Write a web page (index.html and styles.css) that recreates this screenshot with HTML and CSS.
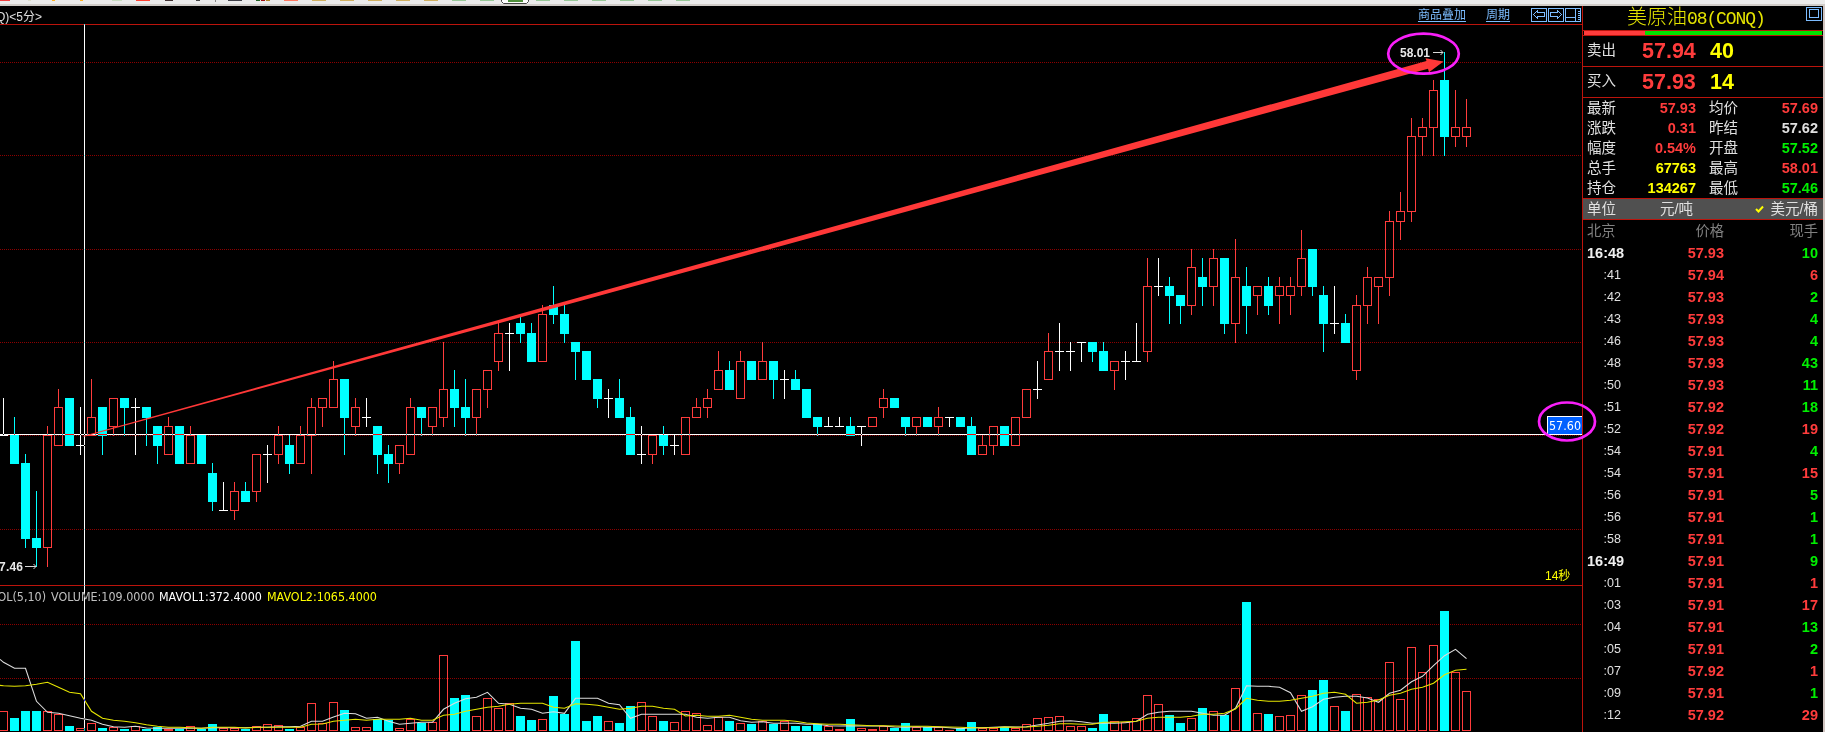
FILE: index.html
```html
<!DOCTYPE html>
<html lang="zh-CN">
<head>
    <meta charset="UTF-8">
    <meta name="viewport" content="width=device-width, initial-scale=1.0">
    <title>美原油08(CONQ)</title>
    <link rel="stylesheet" href="styles.css">
</head>
<body>
    <svg class="toolbar" id="toolbar" width="1825" height="6"></svg>

    <div class="main">
        <div class="chart">
            <div class="chart-header">
                <span class="period">Q)&lt;5分&gt;</span>
                <a class="link" href="#">商品叠加</a>
                <a class="link link-period" href="#">周期</a>
                <div class="nav-icons">
                    <svg width="16" height="14" viewBox="0 0 16 14">
                        <path d="M.5.5h15v13H.5z M2.5 6.5l4-4v2h7v4h-7v2z"/>
                    </svg>
                    <svg width="16" height="14" viewBox="0 0 16 14">
                        <path d="M.5.5h15v13H.5z M13.5 6.5l-4-4v2h-7v4h7v2z"/>
                    </svg>
                    <svg width="16" height="14" viewBox="0 0 16 14">
                        <path d="M.5.5h15v13H.5z M10.5 1v12 M1 9.5h9.5"/>
                        <path d="M13.5 3v9" stroke-dasharray="1 1" stroke-width="2"/>
                    </svg>
                </div>
            </div>
            <svg id="price" class="price-panel" width="1582" height="560" viewBox="0 25 1582 560"></svg>
            <div class="volume-header">
                <span class="vol-name">OL(5,10)</span>
                <span class="vol-value">VOLUME:109.0000</span>
                <span class="vol-ma1">MAVOL1:372.4000</span>
                <span class="vol-ma2">MAVOL2:1065.4000</span>
            </div>
            <svg id="volume" class="volume-panel" width="1582" height="126" viewBox="0 606 1582 126"></svg>
        </div>

        <div class="quote">
            <div class="quote-title">
                <span class="name">美原油<span class="code">08(CONQ)</span></span>
                <svg class="window-icon" width="16" height="14" viewBox="0 0 16 14">
                    <path d="M.5.5h15v13H.5z M3.5 2.5h9v8h-9z"/>
                </svg>
            </div>
            <div class="ratio"><div class="ratio-sell"></div><div class="ratio-buy"></div></div>
            <div class="order">
                <span>卖出</span><b class="red">57.94</b><b class="yellow">40</b>
            </div>
            <div class="order">
                <span>买入</span><b class="red">57.93</b><b class="yellow">14</b>
            </div>
            <div class="stats">
                <span>最新</span><b class="red">57.93</b><span>均价</span><b class="red">57.69</b>
                <span>涨跌</span><b class="red">0.31</b><span>昨结</span><b>57.62</b>
                <span>幅度</span><b class="red">0.54%</b><span>开盘</span><b class="green">57.52</b>
                <span>总手</span><b class="yellow">67763</b><span>最高</span><b class="red">58.01</b>
                <span>持仓</span><b class="yellow">134267</b><span>最低</span><b class="green">57.46</b>
            </div>
            <div class="unit">
                <span>单位</span>
                <span class="unit-cny">元/吨</span>
                <svg width="9" height="8" viewBox="0 0 9 8"><path d="M1 4l2.5 2.5L8 1.5"/></svg>
                <span>美元/桶</span>
            </div>
            <div class="tick tick-head"><span>北京</span><span>价格</span><span>现手</span></div>
            <div id="ticks"></div>
        </div>
    </div>

    <!-- crosshair is inverted against whatever is below it -->
    <div class="crosshair crosshair-x"></div>
    <div class="crosshair crosshair-y"></div>
    <svg class="marks" width="1825" height="732">
        <polygon class="arrow" points="83,436 1426.5,61 1425.5,58.3 1443.5,61.5 1429,72.3 1428,68.8 84,436.8"/>
        <ellipse cx="1423.5" cy="53.7" rx="35.3" ry="20"/>
        <ellipse cx="1567" cy="421.5" rx="28" ry="19"/>
    </svg>

    <script src="chart.js"></script>
</body>
</html>
```

FILE: styles.css
```css
body {
    margin: 0;
    width: 1825px;
    height: 732px;
    overflow: hidden;
    background-color: #000;
    color: #e0e0e0;
    font-family: "Liberation Sans", "Noto Sans CJK SC", sans-serif;
    font-size: 14px;
}
svg {
    display: block;
}
.toolbar {
    background-color: #ebebeb;
    border-bottom: 2px solid #d0ccc8;
    height: 4px;
}
.main {
    display: flex;
    height: 726px;
}

/* chart */
.chart {
    width: 1582px;
    border-right: 1px solid #bc140c;
}
.chart-header {
    display: flex;
    align-items: center;
    height: 18px;
    border-bottom: 1px solid #bc140c;
    font-size: 12px;
}
.period {
    flex: 1;
    margin-left: -4px;
    font-size: 12px;
    white-space: nowrap;
}
.link {
    color: #7cbcff;
    line-height: 16px;
    margin-right: 20px;
    text-decoration: underline;
    text-underline-offset: 2px;
}
.link-period {
    margin-right: 21px;
}
.nav-icons {
    display: flex;
    gap: 1px;
    margin-right: 1px;
    margin-top: -1px;
}
.nav-icons path, .window-icon path {
    fill: none;
    stroke: #7cbcff;
    shape-rendering: crispEdges;
}
.price-panel {
    border-bottom: 1px solid #bc140c;
}
.volume-panel {
    overflow: visible;
}
.volume-header {
    display: flex;
    align-items: center;
    height: 20px;
    font-family: "DejaVu Sans Condensed", "DejaVu Sans", sans-serif;
    font-stretch: condensed;
    font-size: 12.4px;
    white-space: nowrap;
}
.vol-name {
    width: 46px;
    margin-right: 5px;
    display: flex;
    justify-content: flex-end;
    color: #c0c0c0;
}
.vol-value {
    width: 108px;
    color: #c0c0c0;
}
.vol-ma1 {
    width: 108px;
    color: #fff;
}
.vol-ma2 {
    color: #ff0;
}
.grid {
    stroke: #8c0000;
    stroke-dasharray: 1 1;
}
.up {
    fill: none;
    stroke: #ff3c3c;
}
.wick-up {
    fill: #ff3c3c;
}
.down {
    fill: #00ffff;
}
.flat {
    fill: #fff;
}
.ma {
    fill: none;
    stroke-width: 1.1;
}
.ma1 {
    stroke: #dcdcdc;
}
.ma2 {
    stroke: #e6e600;
}
.extreme {
    fill: #e8e8e8;
    font-size: 12px;
    font-weight: bold;
}
.pointer {
    fill: none;
    stroke: #d8d8d8;
}
.cursor-box {
    fill: #0060ff;
    stroke: #fff;
}
.cursor-price {
    fill: #fff;
    font-family: "DejaVu Sans Condensed", "DejaVu Sans", sans-serif;
    font-size: 12px;
}
.countdown {
    fill: #ff0;
    font-size: 12px;
}
.crosshair, .marks {
    position: absolute;
    left: 0;
    top: 0;
}
.crosshair {
    background-color: #fff;
    mix-blend-mode: difference;
}
.crosshair-x {
    top: 434px;
    width: 1547px;
    height: 1px;
}
.crosshair-y {
    top: 24px;
    left: 84px;
    width: 1px;
    height: 707px;
}
.marks ellipse {
    fill: none;
    stroke: #f91ff9;
    stroke-width: 2.7;
}
.arrow {
    fill: #ff3838;
}

/* quote panel */
.quote {
    width: 240px;
    border-right: 2px solid #d0c4c0;
}
.red {
    color: #ff3c3c;
}
.green {
    color: #00f000;
}
.yellow {
    color: #ff0;
}
.quote-title {
    display: flex;
    height: 24px;
    border-bottom: 1px solid #bc140c;
    color: #e4e400;
}
.name {
    flex: 1;
    padding-left: 44px;
    font-size: 20px;
    line-height: 23px;
    font-weight: 300;
    white-space: nowrap;
}
.code {
    font-family: "Liberation Mono", monospace;
    font-size: 18px;
    letter-spacing: -1.1px;
}
.window-icon {
    margin: 1px 1px 0 0;
}
.ratio {
    display: flex;
    height: 4px;
    padding: 0 1px;
    border-bottom: 1px solid #bc140c;
}
.ratio-sell {
    width: 61px;
    background-color: #ff3c3c;
}
.ratio-buy {
    flex: 1;
    background-color: #00e400;
}
.order {
    display: grid;
    grid-template-columns: 55px 68px 1fr;
    align-items: center;
    height: 30px;
    padding-left: 4px;
    border-bottom: 1px solid #bc140c;
}
.order span {
    font-size: 14.5px;
    line-height: 28px;
    padding-bottom: 2px;
}
.order b {
    font-size: 21.5px;
    line-height: 30px;
}
.stats {
    display: grid;
    grid-template-columns: 36px 73px 50px 1fr;
    grid-auto-rows: 20px;
    align-items: center;
    padding: 0 5px 0 4px;
    border-bottom: 1px solid #bc140c;
}
.stats b {
    text-align: right;
    font-size: 14.5px;
    line-height: 20px;
}
.stats span {
    font-size: 14.5px;
    line-height: 20px;
}
.stats span:nth-child(4n+3) {
    padding-left: 13px;
}
.unit {
    display: flex;
    align-items: center;
    height: 20px;
    padding: 0 5px 0 4px;
    font-size: 14.5px;
    line-height: 20px;
    background-color: #505050;
    border-bottom: 1px solid #bc140c;
}
.unit-cny {
    flex: 1;
    padding-left: 44px;
}
.unit svg {
    margin-right: 6px;
}
.unit path {
    fill: none;
    stroke: #ff0;
    stroke-width: 2;
}
.tick {
    display: grid;
    grid-template-columns: 36px 101px 1fr;
    align-items: center;
    height: 22px;
    line-height: 22px;
    padding: 0 5px 0 4px;
    font-size: 14.5px;
    text-align: right;
}
.tick-head {
    color: #808080;
    font-size: 14.3px;
}
.tick-head span:first-child {
    text-align: left;
}
.sec {
    font-size: 12.5px;
    padding-right: 2px;
}
.minute {
    color: #f0f0f0;
    font-weight: bold;
    text-align: left;
}
```

FILE: chart.js
```js
// [type, high, top, bottom, low] in cents above 57.00; c = down, r = up, w = flat
const candles = `
w64,60,60,60 c62,60,57,57 c58,57,49,48 c54,49,48,46 r61,60,48,46 r65,63,59,59 c64,64,59,59 w63,59,59,58
r66,62,60,60 c63,63,60,58 r64,64,61,60 c64,64,63,60 w64,63,63,58 c63,63,62,59 c61,61,59,57 r62,61,58,58
c61,61,57,57 r61,60,57,57 c60,60,57,57 c57,56,53,52 w55,52,52,52 r55,54,52,51 c55,54,53,53 r58,58,54,53
w59,58,58,55 r61,60,58,57 c60,59,57,56 r61,60,57,57 r64,63,60,56 r64,64,63,61 r68,66,63,63 c66,66,62,58
r64,63,61,60 w64,62,62,61 c61,61,58,56 c59,58,57,55 r59,59,57,56 r64,63,58,58 c63,63,62,60 r63,63,61,60
r70,65,62,61 c67,65,63,61 c66,63,62,60 r65,65,62,60 r67,67,65,63 r72,71,68,67 w72,71,71,67 c73,72,71,70
c72,71,68,68 r74,73,68,68 c76,74,73,72 c74,73,71,70 c70,70,69,66 c69,69,66,66 c66,66,64,63 w65,64,64,62
c66,64,62,62 c63,62,58,58 w61,58,58,57 r60,60,58,57 c61,60,59,58 w60,59,59,58 r62,62,58,58 r64,63,62,62
r65,64,63,62 r69,67,65,65 c68,67,65,65 r69,68,64,64 c68,68,66,66 r70,68,66,66 c68,68,66,64 w67,66,66,64
c67,66,65,65 c65,65,62,62 c62,62,61,60 w62,61,61,61 w62,61,61,61 c62,61,60,60 w61,61,61,59 r62,62,61,61
r65,64,63,62 c64,64,63,63 c62,62,61,60 r62,62,61,60 c62,62,61,61 r63,62,61,60 w62,62,62,61 c62,62,61,61
c62,61,58,58 r60,59,58,58 r61,61,59,58 c61,61,59,59 r62,62,59,59 r65,65,62,62 w68,65,65,64 r71,69,66,66
w72,69,69,67 w70,69,69,67 w70,70,70,68 c70,70,69,68 c70,69,67,67 r68,68,67,65 w69,68,68,66 w72,68,68,68
r79,76,69,68 w79,76,76,75 c77,76,75,72 c75,75,74,72 r80,78,74,73 c79,77,76,74 r80,79,76,74 c79,79,72,71
r81,77,72,70 c78,76,74,71 r76,76,75,73 c77,76,74,73 r77,76,75,72 r77,76,75,73 r82,79,76,75 c80,80,76,75
c76,75,72,69 w76,72,72,71 c73,72,70,70 r75,74,67,66 r78,77,74,72 r77,77,76,72 r84,83,77,75 r86,84,83,81
r94,92,84,83 r94,93,92,90 r98,97,93,90 c101,98,92,90 r97,93,92,91 r96,93,92,91
`.trim().split(/\s+/).map(s => [s[0], ...s.slice(1).split(',').map(Number)]);

// bar heights in px
const volumes = [
    20,13,20,20,20,17,5,3,8,3,4,2,5,2,4,2,2,5,2,7,3,3,2,5,7,6,2,4,28,8,29,21,4,4,12,11,3,12,8,9,
    76,33,36,15,33,23,28,15,11,12,35,17,90,10,15,10,8,25,29,15,10,9,20,18,6,14,10,8,7,10,7,10,5,5,7,5,2,12,3,2,
    5,3,8,4,4,4,1,3,9,3,3,4,3,7,13,14,15,5,5,3,17,10,9,13,36,27,16,8,13,23,20,16,43,129,18,17,15,16,36,41,
    51,25,20,37,34,32,69,32,84,59,86,120,59,40
];

// moving averages, in thirds of a px below y = 580
const ma1 = [
    247,265,265,364,397,400,407,415,421,433,440,442,439,444,445,445,445,445,445,443,443,443,443,442,442,440,440,439,424,424,
    411,400,401,415,412,424,433,430,427,427,388,370,356,352,337,370,373,385,388,400,395,400,355,355,355,370,374,415,403,403,
    403,403,403,412,415,412,412,422,427,425,430,430,430,433,433,437,438,437,438,438,438,441,442,440,442,441,443,446,443,443,
    442,440,441,440,435,430,424,422,425,430,429,430,428,424,403,397,394,394,394,400,406,406,385,317,319,319,322,338,394,380,
    358,352,349,349,354,367,340,331,305,289,257,227,208,236
];
const ma2 = [
    317,319,317,313,307,322,337,341,394,415,421,424,428,434,439,442,442,443,445,442,442,442,444,442,442,442,442,442,433,432,
    424,421,418,421,418,418,418,415,421,421,406,403,394,388,382,379,373,370,370,370,382,385,371,373,376,382,388,385,379,379,
    385,388,408,406,409,409,406,412,418,421,421,421,424,429,431,433,433,434,436,437,437,438,439,439,439,440,441,442,443,443,
    443,441,442,441,439,436,431,431,433,433,427,427,425,424,415,412,412,412,409,403,403,400,387,355,361,364,364,361,355,349,
    340,337,343,370,367,360,346,340,328,322,310,284,271,268
];

const ticks = [
    ['16:48', '57.93', 10, 'green'], [':41', '57.94', 6, 'red'], [':42', '57.93', 2, 'green'],
    [':43', '57.93', 4, 'green'], [':46', '57.93', 4, 'green'], [':48', '57.93', 43, 'green'],
    [':50', '57.93', 11, 'green'], [':51', '57.92', 18, 'green'], [':52', '57.92', 19, 'red'],
    [':54', '57.91', 4, 'green'], [':54', '57.91', 15, 'red'], [':56', '57.91', 5, 'green'],
    [':56', '57.91', 1, 'green'], [':58', '57.91', 1, 'green'], ['16:49', '57.91', 9, 'green'],
    [':01', '57.91', 1, 'red'], [':03', '57.91', 17, 'red'], [':04', '57.91', 13, 'green'],
    [':05', '57.91', 2, 'green'], [':07', '57.92', 1, 'red'], [':09', '57.91', 1, 'green'],
    [':12', '57.92', 29, 'red']
];

const priceY = p => Math.floor(62.22 + (100 - p) * 9.34);
const rect = (cls, x, y, w, h) => `<rect class="${cls}" x="${x}" y="${y}" width="${w}" height="${h}"/>`;
const gridLine = y => `<line class="grid" x1="0" y1="${y + 0.5}" x2="1582" y2="${y + 0.5}"/>`;

function drawPrice() {
    let out = [62, 155, 249, 342, 435, 529].map(gridLine).join('');
    candles.forEach(([type, high, top, bottom, low], i) => {
        const x = 3 + i * 11;
        const h = priceY(high), t = priceY(top), b = priceY(bottom), l = priceY(low);
        if (type === 'r') {
            if (t > h) out += rect('wick-up', x, h, 1, t - h);
            if (l > b) out += rect('wick-up', x, b + 1, 1, l - b);
            out += rect('up', x - 3.5, t + 0.5, 8, b - t);
        } else {
            const cls = type === 'c' ? 'down' : 'flat';
            out += rect(cls, x, h, 1, l - h + 1) + rect(cls, x - 4, t, 9, b - t + 1);
        }
    });
    out += '<text class="extreme" x="1400" y="57" textLength="30">58.01</text>';
    out += '<path class="pointer" d="M1433 52.5h10M1440.500 50l2.500 2.500l-2.500 2.500"/>';
    out += '<text class="extreme" x="-1" y="571" textLength="24">7.46</text>';
    out += '<path class="pointer" d="M25 566.5h11M33.500 564l2.500 2.500l-2.500 2.500"/>';
    out += '<rect class="cursor-box" x="1547.5" y="416.5" width="35" height="18"/>';
    out += '<text class="cursor-price" x="1549" y="430" textLength="32" lengthAdjust="spacingAndGlyphs">57.60</text>';
    out += '<text class="countdown" x="1545" y="580">14秒</text>';
    document.getElementById('price').innerHTML = out;
}

function drawVolume() {
    let out = gridLine(624) + gridLine(678);
    volumes.forEach((v, i) => {
        const x = 3 + i * 11;
        if (candles[i][0] === 'c') {
            out += rect('down', x - 4, 731 - v, 9, v);
        } else if (v < 3) {
            out += rect('wick-up', x - 4, 731 - v, 9, v);
        } else {
            out += rect('up', x - 3.5, 731 - v + 0.5, 8, v - 1);
        }
    });
    const points = (data, first) => `0,${580 + first / 3} ` +
        data.map((z, i) => `${3.5 + i * 11},${(580 + z / 3).toFixed(1)}`).join(' ');
    out += `<polyline class="ma ma1" points="${points(ma1, 238)}"/>`;
    out += `<polyline class="ma ma2" points="${points(ma2, 316)}"/>`;
    document.getElementById('volume').innerHTML = out;
}

function drawTicks() {
    document.getElementById('ticks').innerHTML = ticks.map(([time, price, qty, color]) => `
        <div class="tick">
            <span class="${time.length > 3 ? 'minute' : 'sec'}">${time}</span>
            <b class="red">${price}</b>
            <b class="${color}">${qty}</b>
        </div>`).join('');
}

// only the bottom row of the toolbar icons is in view
function drawToolbar() {
    const icons = [
        [0, 10, '#f04040'], [28, 3, '#dcdcc8'], [52, 3, '#ffb020'], [80, 3, '#ffb020'], [112, 10, '#c8dcc0'],
        [136, 14, '#ff4030'], [165, 8, '#403030'], [196, 4, '#404040'], [228, 14, '#404048'],
        [256, 4, '#206020'], [261, 4, '#a01010'], [266, 4, '#b08020'], [284, 14, '#ff7860'],
        [312, 14, '#d0b060'], [340, 14, '#d0b060'], [368, 14, '#d0b060'], [396, 14, '#d0b060'], [424, 14, '#d0b060']
    ];
    [452, 480, 536, 564, 592, 620, 648, 676].forEach(x => icons.push([x, 14, '#98c898']));
    document.getElementById('toolbar').innerHTML =
        icons.map(([x, w, color]) => `<rect x="${x}" y="0" width="${w}" height="1" fill="${color}"/>`).join('') +
        '<rect x="215" y="0" width="1" height="2" fill="#888"/>' +
        '<path d="M501.500 0v1.500l2 2h23l2-2v-1.500" fill="#fff" stroke="#444"/>' +
        '<rect x="508" y="0" width="15" height="2" fill="#50903c"/>';
}

drawToolbar();
drawPrice();
drawVolume();
drawTicks();
```
